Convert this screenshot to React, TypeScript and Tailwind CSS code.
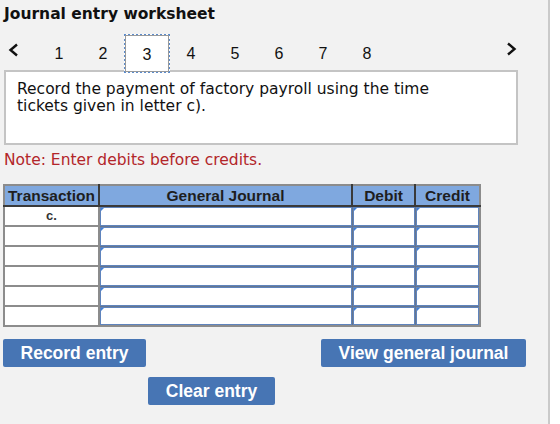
import React from "react";

const pages = [1, 2, 3, 4, 5, 6, 7, 8];
const rows = ["c.", "", "", "", "", ""];

function Chevron({ dir }: { dir: "left" | "right" }) {
  return (
    <svg width="11" height="14" viewBox="0 0 11 14" className="block">
      <polyline
        points={dir === "left" ? "9,1.5 2.5,7 9,12.5" : "2,1.5 8.5,7 2,12.5"}
        fill="none"
        stroke="#111"
        strokeWidth="2.4"
      />
    </svg>
  );
}

function EntryCell() {
  return (
    <td className="h-[20px] border border-[#67768e] p-0">
      <div className="relative h-full border border-[#5f84bd] bg-white">
        <span className="absolute left-0 top-0 h-0 w-0 border-t-[3px] border-r-[3px] border-t-[#3f7fd6] border-r-transparent" />
      </div>
    </td>
  );
}

export default function App() {
  const verdana = { fontFamily: '"DejaVu Sans", Verdana, sans-serif' };
  const helv = { fontFamily: '"Liberation Sans", Arial, sans-serif' };

  return (
    <div className="flex h-[424px] w-[560px] bg-[#f2f2f2] text-[#111]">
      <div className="w-[550px] border-r-2 border-[#cacaca]">
        <h1 className="pl-[4px] pt-[5px] text-[15.5px] font-bold leading-[19px]" style={verdana}>
          Journal entry worksheet
        </h1>

        {/* step tabs */}
        <div className="mt-[10px] flex h-[36px] items-start pl-[4px]" style={helv}>
          <span className="w-[33px] pl-[4px] pt-[9px]">
            <Chevron dir="left" />
          </span>
          {pages.map((p) =>
            p === 3 ? (
              <div
                key={p}
                className="relative z-10 -mx-px flex h-[39px] w-[46px] items-center justify-center border-2 border-dotted border-[#5c8ccc] bg-white pt-[2px] text-[16px] outline outline-1 -outline-offset-2 outline-[#9a9a9a]"
              >
                {p}
              </div>
            ) : (
              <span key={p} className="flex h-[38px] w-[44px] items-center justify-center pt-[2px] text-[16px]">
                {p}
              </span>
            )
          )}
          <span className="ml-auto mr-[31px] pt-[8px]">
            <Chevron dir="right" />
          </span>
        </div>

        <div
          className="ml-[4px] h-[75px] w-[514px] border-2 border-[#c4c4c4] bg-white px-[11px] pt-[9px] text-[15.5px] leading-[17px]"
          style={verdana}
        >
          Record the payment of factory payroll using the time
          <br />
          tickets given in letter c).
        </div>

        <p className="pl-[4px] pt-[6px] text-[15.5px] leading-[18px] text-[#b2262a]" style={verdana}>
          Note: Enter debits before credits.
        </p>

        <table
          className="ml-[3px] mt-[15px] w-[476px] table-fixed border-collapse border-2 border-[#8c8c8c]"
          style={helv}
        >
          <colgroup>
            <col className="w-[95px]" />
            <col className="w-[253px]" />
            <col className="w-[63px]" />
            <col className="w-[65px]" />
          </colgroup>
          <thead>
            <tr className="h-[21px] bg-[#7fa8df] text-[15.5px] leading-[17px] text-[#1e1e1e]">
              <th className="border-b-2 border-r-2 border-[#3a3a3a] px-0 font-bold">Transaction</th>
              <th className="border-b-2 border-r-2 border-[#3a3a3a] font-bold">General Journal</th>
              <th className="border-b-2 border-r-2 border-[#3a3a3a] font-bold">Debit</th>
              <th className="border-b-2 border-[#3a3a3a] font-bold">Credit</th>
            </tr>
          </thead>
          <tbody>
            {rows.map((t, i) => (
              <tr key={i}>
                <td className="h-[20px] border-2 border-[#8c8c8c] bg-white p-0 text-center text-[13px] font-bold leading-[14px] text-[#333]">
                  {t}
                </td>
                <EntryCell />
                <EntryCell />
                <EntryCell />
              </tr>
            ))}
          </tbody>
        </table>

        <div className="mt-[12px] flex w-[526px] justify-between pl-[3px]" style={helv}>
          <button className="h-[28px] w-[143px] rounded-[2px] bg-[#4775b4] text-[17.5px] font-bold text-white">
            Record entry
          </button>
          <button className="h-[28px] w-[205px] rounded-[2px] bg-[#4775b4] text-[17.5px] font-bold text-white">
            View general journal
          </button>
        </div>
        <div className="mt-[10px] pl-[148px]" style={helv}>
          <button className="h-[28px] w-[127px] rounded-[2px] bg-[#4775b4] text-[17.5px] font-bold text-white">
            Clear entry
          </button>
        </div>
      </div>
      <div className="flex-1 bg-white" />
    </div>
  );
}
